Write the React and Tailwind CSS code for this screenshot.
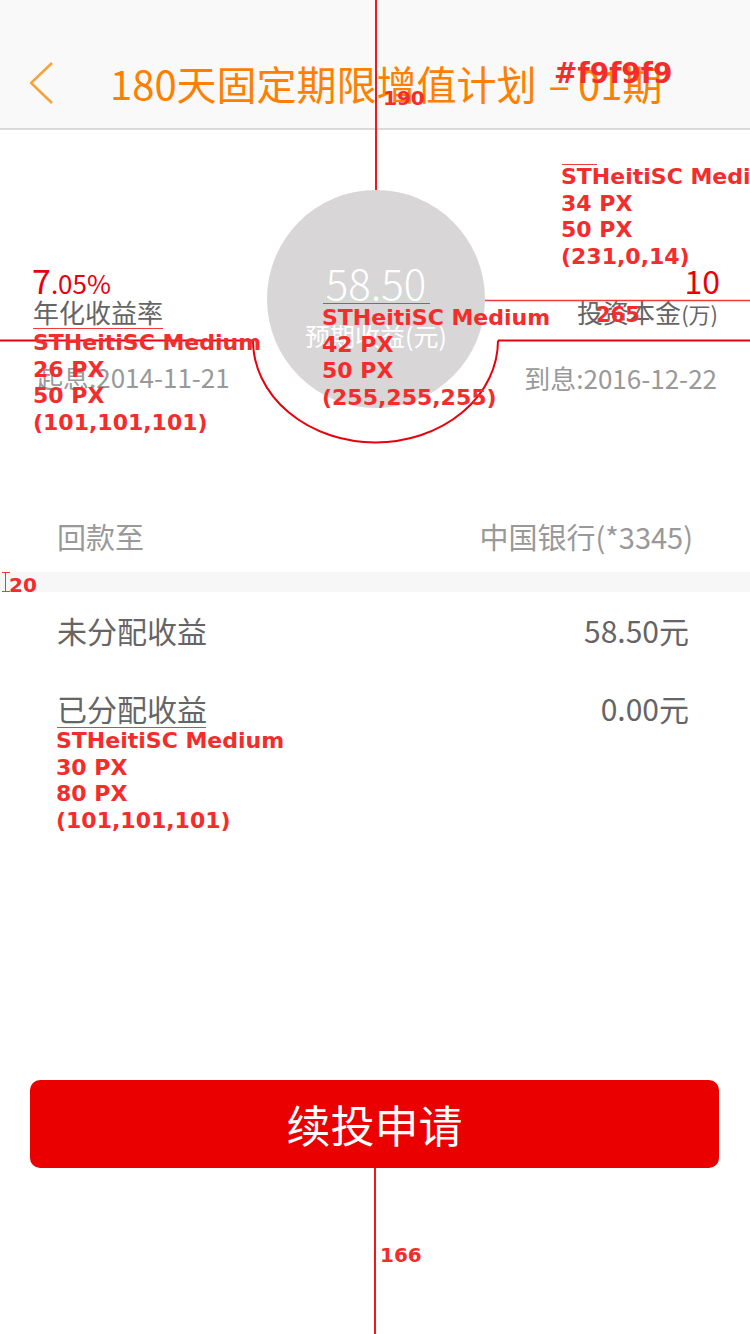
import React from "react";

const CJK = { fontFamily: '"Noto Sans CJK SC", "Noto Sans", sans-serif' };
const ANN = { fontFamily: '"DejaVu Sans", "Verdana", sans-serif' };

function Ann({ className, lines }) {
  return (
    <div
      className={"absolute text-[22px] leading-[26.5px] font-bold text-[#f42c2c] whitespace-nowrap " + className}
      style={ANN}
    >
      {lines.map((l, i) => (
        <div key={i}>{l}</div>
      ))}
    </div>
  );
}

function Label({ className, children }) {
  return (
    <div
      className={"absolute font-bold leading-none text-[#f42c2c] whitespace-nowrap " + className}
      style={ANN}
    >
      {children}
    </div>
  );
}

export default function App() {
  return (
    <div className="relative w-[750px] h-[1334px] bg-white overflow-hidden flex flex-col" style={CJK}>
      {/* Nav bar */}
      <header className="h-[130px] shrink-0 bg-[#f9f9f9] border-b-2 border-[#dadada] flex items-center pt-[38px] pl-[30px]">
        <svg width="24" height="44" viewBox="0 0 24 44" className="shrink-0">
          <polyline points="22,2 1,22 22,42" fill="none" stroke="#f7a23a" strokeWidth="2.6" />
        </svg>
        <h1 className="ml-[56px] text-[40px] leading-[48px] text-[#ff8000] whitespace-nowrap">
          180天固定期限增值计划<span className="ml-[12px]">–</span><span className="ml-[8px]">01期</span>
        </h1>
      </header>

      {/* Summary */}
      <section className="h-[370px] shrink-0 flex justify-between pt-[60px] pl-[32px] pr-[30px]">
        <div className="mt-[73px] w-[235px] flex flex-col">
          <div className="h-[34px] leading-[34px] text-[#e7000e] whitespace-nowrap">
            <span className="text-[34px]">7</span>
            <span className="text-[26px]">.05%</span>
          </div>
          <div className="pl-[1px] text-[26px] leading-[30px] text-[#656565]">年化收益率</div>
          <div className="mt-[35px] pl-[5px] text-[26px] leading-[30px] text-[#999999] whitespace-nowrap">起息:2014-11-21</div>
        </div>

        <div className="w-[218px] h-[218px] rounded-full bg-[#d8d6d7] flex flex-col items-center pt-[70px] text-white">
          <div className="text-[42px] leading-[44px] font-light">58.50</div>
          <div className="mt-[18px] text-[25px] leading-[26px] whitespace-nowrap">预期收益(元)</div>
        </div>

        <div className="mt-[73px] w-[235px] flex flex-col items-end">
          <div className="h-[34px] leading-[34px] text-[32px] text-[#e7000e]">10</div>
          <div className="pr-[2px] text-[26px] leading-[30px] text-[#656565] whitespace-nowrap">
            投资本金<span className="text-[22px]">(万)</span>
          </div>
          <div className="mt-[35px] pr-[3px] text-[26px] leading-[30px] text-[#999999] whitespace-nowrap">到息:2016-12-22</div>
        </div>
      </section>

      {/* Return account */}
      <div className="h-[72px] shrink-0 flex items-center justify-between pl-[57px] pr-[57px] text-[29px] leading-[40px] text-[#999999]">
        <span>回款至</span>
        <span>中国银行(*3345)</span>
      </div>

      <div className="h-[20px] shrink-0 bg-[#f7f7f7]" />

      {/* Income rows */}
      <div className="flex flex-col gap-[38px] pt-[18px] pl-[57px] pr-[61px] text-[30px] leading-[40px] text-[#656565]">
        <div className="flex justify-between">
          <span>未分配收益</span>
          <span>58.50元</span>
        </div>
        <div className="flex justify-between">
          <span>已分配收益</span>
          <span>0.00元</span>
        </div>
      </div>

      {/* Button */}
      <button className="mt-auto mb-[166px] ml-[30px] w-[689px] h-[88px] shrink-0 rounded-[10px] bg-[#eb0000] text-white text-[44px] leading-none flex items-center justify-center">
        续投申请
      </button>

      {/* Annotation lines */}
      <div className="absolute left-[375px] top-0 w-[2px] h-[190px] bg-[#f01818]" />
      <div className="absolute left-[374px] top-[1168px] w-[2px] h-[166px] bg-[#f01818]" />
      <svg className="absolute inset-0 pointer-events-none" width="750" height="1334" viewBox="0 0 750 1334">
        <line x1="0" y1="340.5" x2="253" y2="340.5" stroke="#e8000e" strokeWidth="2" />
        <path d="M253,340.5 A122.5,102 0 0 0 498,340.5" fill="none" stroke="#e8000e" strokeWidth="2" />
        <line x1="498" y1="340.5" x2="750" y2="340.5" stroke="#e8000e" strokeWidth="2" />
        <line x1="485" y1="300.5" x2="750" y2="300.5" stroke="#f33a3a" strokeWidth="1.5" />
        <line x1="33" y1="328.5" x2="163" y2="328.5" stroke="#f33a3a" strokeWidth="1.2" />
        <line x1="323" y1="303.5" x2="430" y2="303.5" stroke="#f33a3a" strokeWidth="1.2" />
        <line x1="57" y1="727.5" x2="206" y2="727.5" stroke="#f33a3a" strokeWidth="1.2" />
        <line x1="562" y1="164.5" x2="597" y2="164.5" stroke="#f33a3a" strokeWidth="1" />
        <line x1="5.5" y1="572" x2="5.5" y2="592" stroke="#f33a3a" strokeWidth="1" />
        <line x1="2" y1="572.5" x2="10" y2="572.5" stroke="#f33a3a" strokeWidth="1" />
        <line x1="2" y1="591.5" x2="10" y2="591.5" stroke="#f33a3a" strokeWidth="1" />
      </svg>

      {/* Annotation texts */}
      <Label className="left-[554px] top-[60px] text-[28px]">#f9f9f9</Label>
      <Label className="left-[383px] top-[88px] text-[20px]">190</Label>
      <Label className="left-[380px] top-[1245px] text-[20px]">166</Label>
      <Label className="left-[9px] top-[575px] text-[20px]">20</Label>
      <Label className="left-[596px] top-[305px] text-[21px]">265</Label>

      <Ann className="left-[561px] top-[164px]" lines={["STHeitiSC Medium", "34 PX", "50 PX", "(231,0,14)"]} />
      <Ann className="left-[33px] top-[330px]" lines={["STHeitiSC Medium", "26 PX", "50 PX", "(101,101,101)"]} />
      <Ann className="left-[322px] top-[305px]" lines={["STHeitiSC Medium", "42 PX", "50 PX", "(255,255,255)"]} />
      <Ann className="left-[56px] top-[728px]" lines={["STHeitiSC Medium", "30 PX", "80 PX", "(101,101,101)"]} />
    </div>
  );
}
